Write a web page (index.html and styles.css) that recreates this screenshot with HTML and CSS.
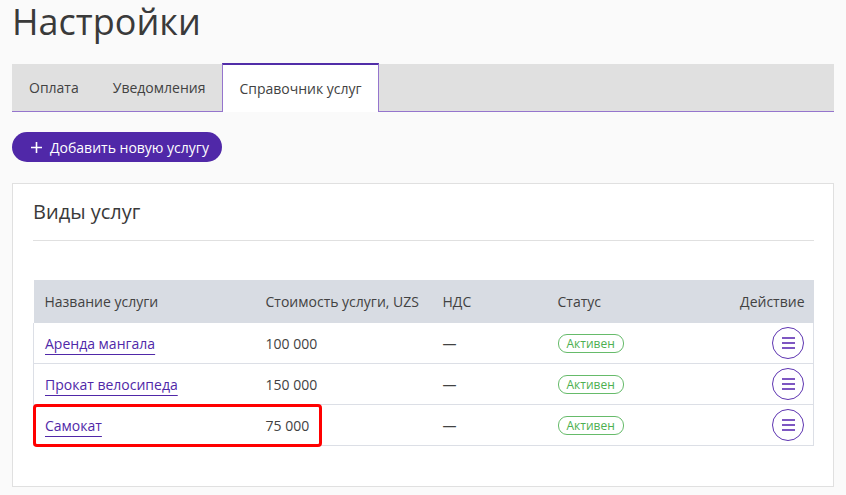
FILE: index.html
```html
<!DOCTYPE html>
<html>
<head>
    <title>Настройки</title>
    <meta charset="UTF-8">
    <meta name="viewport" content="width=device-width, initial-scale=1.0">
    <link rel="stylesheet" href="styles.css">
</head>
<body>
    <h1>Настройки</h1>

    <div class="tabs">
        <div class="tab">Оплата</div>
        <div class="tab">Уведомления</div>
        <div class="tab active">Справочник услуг</div>
    </div>

    <button class="add-btn">
        <svg class="plus" width="11" height="11" viewBox="0 0 11 11"><path d="M5.5 0v11M0 5.5h11" stroke="#fff" stroke-width="1.6"/></svg>
        Добавить новую услугу
    </button>

    <div class="card">
        <h2>Виды услуг</h2>

        <div class="table-wrap">
            <table>
                <thead>
                    <tr>
                        <th class="col-name">Название услуги</th>
                        <th class="col-cost">Стоимость услуги, UZS</th>
                        <th class="col-vat">НДС</th>
                        <th class="col-status">Статус</th>
                        <th class="col-action">Действие</th>
                    </tr>
                </thead>
                <tbody>
                    <tr>
                        <td><a href="#">Аренда мангала</a></td>
                        <td>100 000</td>
                        <td>—</td>
                        <td><span class="badge">Активен</span></td>
                        <td class="col-action"><button class="menu-btn"><span></span><span></span><span></span></button></td>
                    </tr>
                    <tr>
                        <td><a href="#">Прокат велосипеда</a></td>
                        <td>150 000</td>
                        <td>—</td>
                        <td><span class="badge">Активен</span></td>
                        <td class="col-action"><button class="menu-btn"><span></span><span></span><span></span></button></td>
                    </tr>
                    <tr>
                        <td><a href="#">Самокат</a></td>
                        <td>75 000</td>
                        <td>—</td>
                        <td><span class="badge">Активен</span></td>
                        <td class="col-action"><button class="menu-btn"><span></span><span></span><span></span></button></td>
                    </tr>
                </tbody>
            </table>
            <div class="highlight"></div>
        </div>
    </div>
</body>
</html>
```

FILE: styles.css
```css
body {
    font-family: "Open Sans", Arial, sans-serif;
    margin: 0;
    padding: 0 12px;
    background-color: #fafafa;
    color: #424242;
}
h1 {
    font-size: 36px;
    font-weight: normal;
    line-height: 1.2;
    margin: 0 0 21px 0;
    color: #3a3a3a;
}
.tabs {
    display: flex;
    height: 47px;
    background-color: #e0e0e0;
    border-bottom: 1px solid #9575cd;
}
.tab {
    padding: 0 17px;
    font-size: 14px;
    line-height: 47px;
    color: #424242;
}
.tab.active {
    background-color: #fff;
    margin-top: -1px;
    margin-bottom: -1px;
    line-height: 47px;
    border-top: 2px solid #512da8;
    border-left: 1px solid #9575cd;
    border-right: 1px solid #9575cd;
    padding: 0 16px;
}
.add-btn {
    display: flex;
    align-items: center;
    margin-top: 20px;
    height: 30px;
    padding: 0 13px 0 19px;
    border: none;
    border-radius: 15px;
    background-color: #5028a8;
    color: #fff;
    font-family: "Open Sans", Arial, sans-serif;
    font-size: 14px;
    cursor: pointer;
}
.plus {
    margin-right: 8px;
}
.card {
    margin-top: 21px;
    background-color: #fff;
    border: 1px solid #e0e0e0;
    padding: 16px 19px 40px 20px;
}
h2 {
    font-size: 20px;
    font-weight: normal;
    line-height: 24px;
    margin: 0;
    padding-bottom: 16px;
    border-bottom: 1px solid #e0e0e0;
    color: #3a3a3a;
}
.table-wrap {
    position: relative;
    margin-top: 39px;
}
table {
    width: 100%;
    border-collapse: collapse;
    table-layout: fixed;
    font-size: 14px;
}
th {
    background-color: #d8dce3;
    font-weight: normal;
    text-align: left;
    height: 43px;
    padding: 0 11px;
    color: #424242;
}
td {
    height: 40px;
    padding: 0 11px;
    border-bottom: 1px solid #dcdfe6;
}
tbody tr td:first-child {
    border-left: 1px solid #dcdfe6;
}
tbody tr td:last-child {
    border-right: 1px solid #dcdfe6;
}
.col-name { width: 199px; }
.col-cost { width: 155px; }
.col-vat { width: 93px; }
.col-status { width: 150px; }
.col-action {
    text-align: right;
    padding-right: 9px;
}
a {
    color: #5028a8;
    text-decoration: underline;
    text-decoration-color: #5028a8;
    text-underline-offset: 5px;
}
.badge {
    display: inline-block;
    font-size: 12px;
    line-height: 17px;
    padding: 0 8px;
    border: 1px solid #66bb6a;
    border-radius: 9px;
    color: #4caf50;
}
.menu-btn {
    display: inline-flex;
    flex-direction: column;
    align-items: center;
    justify-content: center;
    gap: 3px;
    width: 32px;
    height: 32px;
    vertical-align: middle;
    border: 1px solid #5e35b1;
    border-radius: 50%;
    background: #fff;
    padding: 0;
    cursor: pointer;
}
.menu-btn span {
    display: block;
    width: 13px;
    height: 2px;
    background-color: #7e57c2;
}
.highlight {
    position: absolute;
    left: 0;
    top: 124px;
    width: 283px;
    height: 37px;
    border: 3px solid #ff0000;
    border-radius: 4px;
}
```
